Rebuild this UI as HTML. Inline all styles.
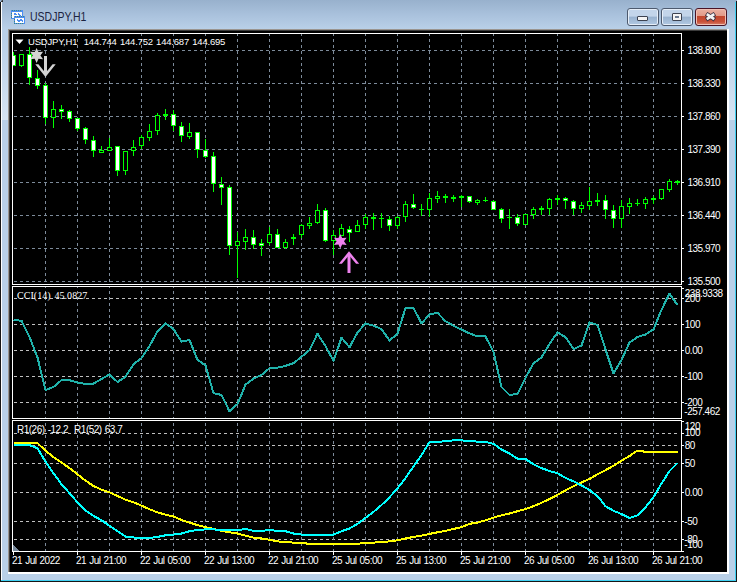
<!DOCTYPE html>
<html><head><meta charset="utf-8"><title>USDJPY,H1</title>
<style>
html,body{margin:0;padding:0;width:739px;height:582px;overflow:hidden;background:#ffffff}
.a{position:absolute}
#win{position:absolute;left:0;top:0;width:737px;height:582px;background:#b9d0e8}
#tb{position:absolute;left:0;top:0;width:737px;height:29px;background:linear-gradient(#98b1cd,#a9c1dc 50%,#b9d0e8)}
#ttl{position:absolute;left:30px;top:10.4px;font-family:"Liberation Sans",sans-serif;font-size:12.5px;color:#1b2340;white-space:pre;transform:scaleX(0.84);transform-origin:0 0}
.btn{position:absolute;top:8px;width:30px;height:16px;border:1px solid #4d5a6e;border-radius:3px;box-shadow:inset 0 0 0 1px #e6eef8;background:linear-gradient(#c3d5ea 0%,#c3d5ea 45%,#98b2cf 50%,#b2c9e3 100%)}
#cls{background:linear-gradient(#eab0a2 0%,#e29a88 42%,#c2452c 46%,#c9523a 80%,#d8826c 100%);border-color:#4a1426;box-shadow:inset 0 0 0 1px #f0c0b4}
</style></head><body>
<div id="win">
<div id="tb"></div>
<div class="a" style="left:2px;top:38px;width:6px;height:82px;background:linear-gradient(#b9d0e8,#d2e1f1 85%,#d6e4f2)"></div>
<div class="a" style="left:729px;top:38px;width:6px;height:82px;background:linear-gradient(#b9d0e8,#d2e1f1 85%,#d6e4f2)"></div>
<div class="a" style="left:0;top:2px;width:1px;height:580px;background:#161616"></div>
<div class="a" style="left:1px;top:0;width:2px;height:2px;background:#2a2a2a;border-radius:2px 0 0 0"></div>
<div class="a" style="left:1px;top:2px;width:1px;height:578px;background:#ffffff"></div>
<div class="a" style="left:735px;top:2px;width:1px;height:579px;background:#40d0f2"></div>
<div class="a" style="left:736px;top:1px;width:1px;height:581px;background:#161616"></div>
<div class="a" style="left:1px;top:580px;width:735px;height:1px;background:#40d0f2"></div>
<div class="a" style="left:0;top:581px;width:737px;height:1px;background:#161616"></div>
<svg style="position:absolute;left:0;top:0" width="30" height="30" shape-rendering="crispEdges">
<rect x="11" y="10" width="12" height="9" fill="#4c8df2"/>
<rect x="12" y="12" width="10" height="6" fill="#fdfdf6"/>
<rect x="14" y="16" width="11" height="8" fill="#4c8df2"/>
<rect x="15" y="18" width="9" height="5" fill="#ffffff"/>
<path d="M13 14h1v-1h1v1h1M17 13h1v1h1v1h1" stroke="#4c8df2" fill="none" transform="translate(0.5,0.5)"/>
<path d="M16 19h1v1h1v1h1v-1h1v-1h1v1h1v1" stroke="#4c8df2" fill="none" transform="translate(0.5,0.5)"/>
<path d="M12 10h1M14 10h1M16 10h1M18 10h1M20 10h1M15 16h1M17 16h1M19 16h1M21 16h1M23 16h1M11 13h1M11 15h1M11 17h1M14 19h1M14 21h1M14 23h1M16 23h1M18 23h1M20 23h1M22 23h1" stroke="#3f8a7a" fill="none" transform="translate(0,0.5)"/>
</svg>
<div id="ttl">USDJPY,H1</div>
<div class="btn" style="left:627px"><div class="a" style="left:9px;top:7px;width:9px;height:3px;border:1px solid #3c4250;border-radius:1px;background:#f4f4f4"></div></div>
<div class="btn" style="left:661px"><div class="a" style="left:10px;top:4px;width:8px;height:6px;border:1px solid #3c4250;border-radius:1px;background:#f4f4f4"><div class="a" style="left:2px;top:2px;width:4px;height:2px;background:#6b7a90"></div></div></div>
<div class="btn" id="cls" style="left:695px"><svg width="30" height="16" style="position:absolute;left:0;top:0"><path d="M11.9 5.9 L17.1 9.4 M17.1 5.9 L11.9 9.4" stroke="#3a3040" stroke-width="4.3" stroke-linecap="square"/><path d="M11.9 5.9 L17.1 9.4 M17.1 5.9 L11.9 9.4" stroke="#f2f2f2" stroke-width="2.7" stroke-linecap="square"/></svg></div>
<div class="a" style="left:8px;top:29px;width:721px;height:545px;background:#000"></div>
<div class="a" style="left:8px;top:29px;width:720px;height:1px;background:#9a9590"></div>
<div class="a" style="left:8px;top:29px;width:1px;height:544px;background:#9a9590"></div>
<div class="a" style="left:9px;top:30px;width:718px;height:1px;background:#3c3c3c"></div>
<div class="a" style="left:9px;top:30px;width:1px;height:542px;background:#3c3c3c"></div>
<div class="a" style="left:727px;top:29px;width:2px;height:545px;background:#ffffff"></div>
<div class="a" style="left:8px;top:572px;width:721px;height:2px;background:#ffffff"></div>
</div>
<svg width="739" height="582" viewBox="0 0 739 582" shape-rendering="crispEdges" style="position:absolute;left:0;top:0"><defs><clipPath id="cp0"><rect x="13" y="34" width="668" height="250"/></clipPath><clipPath id="cp1"><rect x="13" y="287" width="668" height="131"/></clipPath><clipPath id="cp2"><rect x="13" y="421" width="668" height="130"/></clipPath></defs><g clip-path="url(#cp0)"><line x1="14" y1="50.5" x2="680" y2="50.5" stroke="#7d8b9a" stroke-width="1" stroke-dasharray="3 3"/><line x1="14" y1="83.5" x2="680" y2="83.5" stroke="#7d8b9a" stroke-width="1" stroke-dasharray="3 3"/><line x1="14" y1="116.5" x2="680" y2="116.5" stroke="#7d8b9a" stroke-width="1" stroke-dasharray="3 3"/><line x1="14" y1="149.5" x2="680" y2="149.5" stroke="#7d8b9a" stroke-width="1" stroke-dasharray="3 3"/><line x1="14" y1="182.5" x2="680" y2="182.5" stroke="#7d8b9a" stroke-width="1" stroke-dasharray="3 3"/><line x1="14" y1="215.5" x2="680" y2="215.5" stroke="#7d8b9a" stroke-width="1" stroke-dasharray="3 3"/><line x1="14" y1="248.5" x2="680" y2="248.5" stroke="#7d8b9a" stroke-width="1" stroke-dasharray="3 3"/><line x1="14" y1="281.5" x2="680" y2="281.5" stroke="#7d8b9a" stroke-width="1" stroke-dasharray="3 3"/><line x1="45.5" y1="33" x2="45.5" y2="284" stroke="#7d8b9a" stroke-width="1" stroke-dasharray="3 3"/><line x1="77.5" y1="33" x2="77.5" y2="284" stroke="#7d8b9a" stroke-width="1" stroke-dasharray="3 3"/><line x1="109.5" y1="33" x2="109.5" y2="284" stroke="#7d8b9a" stroke-width="1" stroke-dasharray="3 3"/><line x1="141.5" y1="33" x2="141.5" y2="284" stroke="#7d8b9a" stroke-width="1" stroke-dasharray="3 3"/><line x1="173.5" y1="33" x2="173.5" y2="284" stroke="#7d8b9a" stroke-width="1" stroke-dasharray="3 3"/><line x1="205.5" y1="33" x2="205.5" y2="284" stroke="#7d8b9a" stroke-width="1" stroke-dasharray="3 3"/><line x1="237.5" y1="33" x2="237.5" y2="284" stroke="#7d8b9a" stroke-width="1" stroke-dasharray="3 3"/><line x1="269.5" y1="33" x2="269.5" y2="284" stroke="#7d8b9a" stroke-width="1" stroke-dasharray="3 3"/><line x1="301.5" y1="33" x2="301.5" y2="284" stroke="#7d8b9a" stroke-width="1" stroke-dasharray="3 3"/><line x1="333.5" y1="33" x2="333.5" y2="284" stroke="#7d8b9a" stroke-width="1" stroke-dasharray="3 3"/><line x1="365.5" y1="33" x2="365.5" y2="284" stroke="#7d8b9a" stroke-width="1" stroke-dasharray="3 3"/><line x1="397.5" y1="33" x2="397.5" y2="284" stroke="#7d8b9a" stroke-width="1" stroke-dasharray="3 3"/><line x1="429.5" y1="33" x2="429.5" y2="284" stroke="#7d8b9a" stroke-width="1" stroke-dasharray="3 3"/><line x1="461.5" y1="33" x2="461.5" y2="284" stroke="#7d8b9a" stroke-width="1" stroke-dasharray="3 3"/><line x1="493.5" y1="33" x2="493.5" y2="284" stroke="#7d8b9a" stroke-width="1" stroke-dasharray="3 3"/><line x1="525.5" y1="33" x2="525.5" y2="284" stroke="#7d8b9a" stroke-width="1" stroke-dasharray="3 3"/><line x1="557.5" y1="33" x2="557.5" y2="284" stroke="#7d8b9a" stroke-width="1" stroke-dasharray="3 3"/><line x1="589.5" y1="33" x2="589.5" y2="284" stroke="#7d8b9a" stroke-width="1" stroke-dasharray="3 3"/><line x1="621.5" y1="33" x2="621.5" y2="284" stroke="#7d8b9a" stroke-width="1" stroke-dasharray="3 3"/><line x1="653.5" y1="33" x2="653.5" y2="284" stroke="#7d8b9a" stroke-width="1" stroke-dasharray="3 3"/></g><g clip-path="url(#cp1)"><line x1="14" y1="298.5" x2="680" y2="298.5" stroke="#c0c0c0" stroke-width="1" stroke-dasharray="3 3"/><line x1="14" y1="324.5" x2="680" y2="324.5" stroke="#c0c0c0" stroke-width="1" stroke-dasharray="3 3"/><line x1="14" y1="350.5" x2="680" y2="350.5" stroke="#c0c0c0" stroke-width="1" stroke-dasharray="3 3"/><line x1="14" y1="376.5" x2="680" y2="376.5" stroke="#c0c0c0" stroke-width="1" stroke-dasharray="3 3"/><line x1="14" y1="402.5" x2="680" y2="402.5" stroke="#c0c0c0" stroke-width="1" stroke-dasharray="3 3"/><line x1="45.5" y1="33" x2="45.5" y2="418" stroke="#7d8b9a" stroke-width="1" stroke-dasharray="3 3"/><line x1="77.5" y1="33" x2="77.5" y2="418" stroke="#7d8b9a" stroke-width="1" stroke-dasharray="3 3"/><line x1="109.5" y1="33" x2="109.5" y2="418" stroke="#7d8b9a" stroke-width="1" stroke-dasharray="3 3"/><line x1="141.5" y1="33" x2="141.5" y2="418" stroke="#7d8b9a" stroke-width="1" stroke-dasharray="3 3"/><line x1="173.5" y1="33" x2="173.5" y2="418" stroke="#7d8b9a" stroke-width="1" stroke-dasharray="3 3"/><line x1="205.5" y1="33" x2="205.5" y2="418" stroke="#7d8b9a" stroke-width="1" stroke-dasharray="3 3"/><line x1="237.5" y1="33" x2="237.5" y2="418" stroke="#7d8b9a" stroke-width="1" stroke-dasharray="3 3"/><line x1="269.5" y1="33" x2="269.5" y2="418" stroke="#7d8b9a" stroke-width="1" stroke-dasharray="3 3"/><line x1="301.5" y1="33" x2="301.5" y2="418" stroke="#7d8b9a" stroke-width="1" stroke-dasharray="3 3"/><line x1="333.5" y1="33" x2="333.5" y2="418" stroke="#7d8b9a" stroke-width="1" stroke-dasharray="3 3"/><line x1="365.5" y1="33" x2="365.5" y2="418" stroke="#7d8b9a" stroke-width="1" stroke-dasharray="3 3"/><line x1="397.5" y1="33" x2="397.5" y2="418" stroke="#7d8b9a" stroke-width="1" stroke-dasharray="3 3"/><line x1="429.5" y1="33" x2="429.5" y2="418" stroke="#7d8b9a" stroke-width="1" stroke-dasharray="3 3"/><line x1="461.5" y1="33" x2="461.5" y2="418" stroke="#7d8b9a" stroke-width="1" stroke-dasharray="3 3"/><line x1="493.5" y1="33" x2="493.5" y2="418" stroke="#7d8b9a" stroke-width="1" stroke-dasharray="3 3"/><line x1="525.5" y1="33" x2="525.5" y2="418" stroke="#7d8b9a" stroke-width="1" stroke-dasharray="3 3"/><line x1="557.5" y1="33" x2="557.5" y2="418" stroke="#7d8b9a" stroke-width="1" stroke-dasharray="3 3"/><line x1="589.5" y1="33" x2="589.5" y2="418" stroke="#7d8b9a" stroke-width="1" stroke-dasharray="3 3"/><line x1="621.5" y1="33" x2="621.5" y2="418" stroke="#7d8b9a" stroke-width="1" stroke-dasharray="3 3"/><line x1="653.5" y1="33" x2="653.5" y2="418" stroke="#7d8b9a" stroke-width="1" stroke-dasharray="3 3"/></g><g clip-path="url(#cp2)"><line x1="14" y1="433.5" x2="680" y2="433.5" stroke="#c0c0c0" stroke-width="1" stroke-dasharray="3 3"/><line x1="14" y1="445.5" x2="680" y2="445.5" stroke="#c0c0c0" stroke-width="1" stroke-dasharray="3 3"/><line x1="14" y1="463.5" x2="680" y2="463.5" stroke="#c0c0c0" stroke-width="1" stroke-dasharray="3 3"/><line x1="14" y1="492.5" x2="680" y2="492.5" stroke="#c0c0c0" stroke-width="1" stroke-dasharray="3 3"/><line x1="14" y1="521.5" x2="680" y2="521.5" stroke="#c0c0c0" stroke-width="1" stroke-dasharray="3 3"/><line x1="14" y1="539.5" x2="680" y2="539.5" stroke="#c0c0c0" stroke-width="1" stroke-dasharray="3 3"/><line x1="45.5" y1="33" x2="45.5" y2="551" stroke="#7d8b9a" stroke-width="1" stroke-dasharray="3 3"/><line x1="77.5" y1="33" x2="77.5" y2="551" stroke="#7d8b9a" stroke-width="1" stroke-dasharray="3 3"/><line x1="109.5" y1="33" x2="109.5" y2="551" stroke="#7d8b9a" stroke-width="1" stroke-dasharray="3 3"/><line x1="141.5" y1="33" x2="141.5" y2="551" stroke="#7d8b9a" stroke-width="1" stroke-dasharray="3 3"/><line x1="173.5" y1="33" x2="173.5" y2="551" stroke="#7d8b9a" stroke-width="1" stroke-dasharray="3 3"/><line x1="205.5" y1="33" x2="205.5" y2="551" stroke="#7d8b9a" stroke-width="1" stroke-dasharray="3 3"/><line x1="237.5" y1="33" x2="237.5" y2="551" stroke="#7d8b9a" stroke-width="1" stroke-dasharray="3 3"/><line x1="269.5" y1="33" x2="269.5" y2="551" stroke="#7d8b9a" stroke-width="1" stroke-dasharray="3 3"/><line x1="301.5" y1="33" x2="301.5" y2="551" stroke="#7d8b9a" stroke-width="1" stroke-dasharray="3 3"/><line x1="333.5" y1="33" x2="333.5" y2="551" stroke="#7d8b9a" stroke-width="1" stroke-dasharray="3 3"/><line x1="365.5" y1="33" x2="365.5" y2="551" stroke="#7d8b9a" stroke-width="1" stroke-dasharray="3 3"/><line x1="397.5" y1="33" x2="397.5" y2="551" stroke="#7d8b9a" stroke-width="1" stroke-dasharray="3 3"/><line x1="429.5" y1="33" x2="429.5" y2="551" stroke="#7d8b9a" stroke-width="1" stroke-dasharray="3 3"/><line x1="461.5" y1="33" x2="461.5" y2="551" stroke="#7d8b9a" stroke-width="1" stroke-dasharray="3 3"/><line x1="493.5" y1="33" x2="493.5" y2="551" stroke="#7d8b9a" stroke-width="1" stroke-dasharray="3 3"/><line x1="525.5" y1="33" x2="525.5" y2="551" stroke="#7d8b9a" stroke-width="1" stroke-dasharray="3 3"/><line x1="557.5" y1="33" x2="557.5" y2="551" stroke="#7d8b9a" stroke-width="1" stroke-dasharray="3 3"/><line x1="589.5" y1="33" x2="589.5" y2="551" stroke="#7d8b9a" stroke-width="1" stroke-dasharray="3 3"/><line x1="621.5" y1="33" x2="621.5" y2="551" stroke="#7d8b9a" stroke-width="1" stroke-dasharray="3 3"/><line x1="653.5" y1="33" x2="653.5" y2="551" stroke="#7d8b9a" stroke-width="1" stroke-dasharray="3 3"/></g><g clip-path="url(#cp0)"><rect x="13" y="52" width="1" height="14" fill="#00ff00"/><rect x="11" y="55" width="5" height="11" fill="#00ff00"/><rect x="12" y="56" width="3" height="9" fill="#ffffff"/><rect x="21" y="54" width="1" height="13" fill="#00ff00"/><rect x="19" y="54" width="5" height="12" fill="#00ff00"/><rect x="20" y="55" width="3" height="10" fill="#000000"/><rect x="29" y="47" width="1" height="38" fill="#00ff00"/><rect x="27" y="54" width="5" height="24" fill="#00ff00"/><rect x="28" y="55" width="3" height="22" fill="#ffffff"/><rect x="37" y="70" width="1" height="19" fill="#00ff00"/><rect x="35" y="78" width="5" height="8" fill="#00ff00"/><rect x="36" y="79" width="3" height="6" fill="#ffffff"/><rect x="45" y="83" width="1" height="41" fill="#00ff00"/><rect x="43" y="85" width="5" height="33" fill="#00ff00"/><rect x="44" y="86" width="3" height="31" fill="#ffffff"/><rect x="53" y="101" width="1" height="27" fill="#00ff00"/><rect x="51" y="109" width="5" height="9" fill="#00ff00"/><rect x="52" y="110" width="3" height="7" fill="#000000"/><rect x="61" y="105" width="1" height="14" fill="#00ff00"/><rect x="59" y="109" width="5" height="3" fill="#00ff00"/><rect x="60" y="110" width="3" height="1" fill="#ffffff"/><rect x="69" y="110" width="1" height="12" fill="#00ff00"/><rect x="67" y="111" width="5" height="8" fill="#00ff00"/><rect x="68" y="112" width="3" height="6" fill="#ffffff"/><rect x="77" y="118" width="1" height="13" fill="#00ff00"/><rect x="75" y="118" width="5" height="11" fill="#00ff00"/><rect x="76" y="119" width="3" height="9" fill="#ffffff"/><rect x="85" y="127" width="1" height="17" fill="#00ff00"/><rect x="83" y="128" width="5" height="12" fill="#00ff00"/><rect x="84" y="129" width="3" height="10" fill="#ffffff"/><rect x="93" y="136" width="1" height="21" fill="#00ff00"/><rect x="91" y="140" width="5" height="11" fill="#00ff00"/><rect x="92" y="141" width="3" height="9" fill="#ffffff"/><rect x="101" y="146" width="1" height="7" fill="#00ff00"/><rect x="99" y="150" width="5" height="3" fill="#00ff00"/><rect x="100" y="151" width="3" height="1" fill="#000000"/><rect x="109" y="138" width="1" height="13" fill="#00ff00"/><rect x="107" y="147" width="5" height="4" fill="#00ff00"/><rect x="108" y="148" width="3" height="2" fill="#000000"/><rect x="117" y="146" width="1" height="30" fill="#00ff00"/><rect x="115" y="146" width="5" height="25" fill="#00ff00"/><rect x="116" y="147" width="3" height="23" fill="#ffffff"/><rect x="125" y="151" width="1" height="24" fill="#00ff00"/><rect x="123" y="151" width="5" height="20" fill="#00ff00"/><rect x="124" y="152" width="3" height="18" fill="#000000"/><rect x="133" y="140" width="1" height="16" fill="#00ff00"/><rect x="131" y="147" width="5" height="4" fill="#00ff00"/><rect x="132" y="148" width="3" height="2" fill="#000000"/><rect x="141" y="135" width="1" height="14" fill="#00ff00"/><rect x="139" y="137" width="5" height="9" fill="#00ff00"/><rect x="140" y="138" width="3" height="7" fill="#000000"/><rect x="149" y="124" width="1" height="17" fill="#00ff00"/><rect x="147" y="131" width="5" height="7" fill="#00ff00"/><rect x="148" y="132" width="3" height="5" fill="#000000"/><rect x="157" y="113" width="1" height="22" fill="#00ff00"/><rect x="155" y="115" width="5" height="16" fill="#00ff00"/><rect x="156" y="116" width="3" height="14" fill="#000000"/><rect x="165" y="109" width="1" height="11" fill="#00ff00"/><rect x="163" y="114" width="5" height="2" fill="#00ff00"/><rect x="173" y="110" width="1" height="21" fill="#00ff00"/><rect x="171" y="114" width="5" height="12" fill="#00ff00"/><rect x="172" y="115" width="3" height="10" fill="#ffffff"/><rect x="181" y="122" width="1" height="20" fill="#00ff00"/><rect x="179" y="126" width="5" height="10" fill="#00ff00"/><rect x="180" y="127" width="3" height="8" fill="#ffffff"/><rect x="189" y="123" width="1" height="16" fill="#00ff00"/><rect x="187" y="132" width="5" height="5" fill="#00ff00"/><rect x="188" y="133" width="3" height="3" fill="#000000"/><rect x="197" y="132" width="1" height="26" fill="#00ff00"/><rect x="195" y="132" width="5" height="18" fill="#00ff00"/><rect x="196" y="133" width="3" height="16" fill="#ffffff"/><rect x="205" y="139" width="1" height="19" fill="#00ff00"/><rect x="203" y="150" width="5" height="7" fill="#00ff00"/><rect x="204" y="151" width="3" height="5" fill="#ffffff"/><rect x="213" y="152" width="1" height="40" fill="#00ff00"/><rect x="211" y="156" width="5" height="28" fill="#00ff00"/><rect x="212" y="157" width="3" height="26" fill="#ffffff"/><rect x="221" y="177" width="1" height="28" fill="#00ff00"/><rect x="219" y="184" width="5" height="4" fill="#00ff00"/><rect x="220" y="185" width="3" height="2" fill="#ffffff"/><rect x="229" y="185" width="1" height="70" fill="#00ff00"/><rect x="227" y="187" width="5" height="59" fill="#00ff00"/><rect x="228" y="188" width="3" height="57" fill="#ffffff"/><rect x="237" y="232" width="1" height="46" fill="#00ff00"/><rect x="235" y="241" width="5" height="5" fill="#00ff00"/><rect x="236" y="242" width="3" height="3" fill="#000000"/><rect x="245" y="229" width="1" height="21" fill="#00ff00"/><rect x="243" y="237" width="5" height="5" fill="#00ff00"/><rect x="244" y="238" width="3" height="3" fill="#000000"/><rect x="253" y="230" width="1" height="19" fill="#00ff00"/><rect x="251" y="237" width="5" height="8" fill="#00ff00"/><rect x="252" y="238" width="3" height="6" fill="#ffffff"/><rect x="261" y="239" width="1" height="17" fill="#00ff00"/><rect x="259" y="243" width="5" height="3" fill="#00ff00"/><rect x="260" y="244" width="3" height="1" fill="#ffffff"/><rect x="269" y="227" width="1" height="18" fill="#00ff00"/><rect x="267" y="234" width="5" height="9" fill="#00ff00"/><rect x="268" y="235" width="3" height="7" fill="#000000"/><rect x="277" y="229" width="1" height="19" fill="#00ff00"/><rect x="275" y="234" width="5" height="14" fill="#00ff00"/><rect x="276" y="235" width="3" height="12" fill="#ffffff"/><rect x="285" y="239" width="1" height="10" fill="#00ff00"/><rect x="283" y="242" width="5" height="6" fill="#00ff00"/><rect x="284" y="243" width="3" height="4" fill="#000000"/><rect x="293" y="234" width="1" height="11" fill="#00ff00"/><rect x="291" y="237" width="5" height="2" fill="#00ff00"/><rect x="301" y="224" width="1" height="14" fill="#00ff00"/><rect x="299" y="225" width="5" height="10" fill="#00ff00"/><rect x="300" y="226" width="3" height="8" fill="#000000"/><rect x="309" y="217" width="1" height="12" fill="#00ff00"/><rect x="307" y="223" width="5" height="3" fill="#00ff00"/><rect x="308" y="224" width="3" height="1" fill="#000000"/><rect x="317" y="204" width="1" height="20" fill="#00ff00"/><rect x="315" y="210" width="5" height="13" fill="#00ff00"/><rect x="316" y="211" width="3" height="11" fill="#000000"/><rect x="325" y="208" width="1" height="34" fill="#00ff00"/><rect x="323" y="210" width="5" height="31" fill="#00ff00"/><rect x="324" y="211" width="3" height="29" fill="#ffffff"/><rect x="333" y="230" width="1" height="25" fill="#00ff00"/><rect x="331" y="235" width="5" height="6" fill="#00ff00"/><rect x="332" y="236" width="3" height="4" fill="#000000"/><rect x="341" y="224" width="1" height="12" fill="#00ff00"/><rect x="339" y="228" width="5" height="8" fill="#00ff00"/><rect x="340" y="229" width="3" height="6" fill="#000000"/><rect x="349" y="226" width="1" height="16" fill="#00ff00"/><rect x="347" y="229" width="5" height="4" fill="#00ff00"/><rect x="348" y="230" width="3" height="2" fill="#ffffff"/><rect x="357" y="220" width="1" height="12" fill="#00ff00"/><rect x="355" y="225" width="5" height="7" fill="#00ff00"/><rect x="356" y="226" width="3" height="5" fill="#000000"/><rect x="365" y="214" width="1" height="15" fill="#00ff00"/><rect x="363" y="217" width="5" height="8" fill="#00ff00"/><rect x="364" y="218" width="3" height="6" fill="#000000"/><rect x="373" y="213" width="1" height="17" fill="#00ff00"/><rect x="371" y="217" width="5" height="2" fill="#00ff00"/><rect x="381" y="213" width="1" height="15" fill="#00ff00"/><rect x="379" y="218" width="5" height="1" fill="#00ff00"/><rect x="389" y="216" width="1" height="15" fill="#00ff00"/><rect x="387" y="219" width="5" height="7" fill="#00ff00"/><rect x="388" y="220" width="3" height="5" fill="#ffffff"/><rect x="397" y="216" width="1" height="13" fill="#00ff00"/><rect x="395" y="217" width="5" height="9" fill="#00ff00"/><rect x="396" y="218" width="3" height="7" fill="#000000"/><rect x="405" y="201" width="1" height="21" fill="#00ff00"/><rect x="403" y="204" width="5" height="13" fill="#00ff00"/><rect x="404" y="205" width="3" height="11" fill="#000000"/><rect x="413" y="194" width="1" height="15" fill="#00ff00"/><rect x="411" y="204" width="5" height="4" fill="#00ff00"/><rect x="412" y="205" width="3" height="2" fill="#ffffff"/><rect x="421" y="204" width="1" height="12" fill="#00ff00"/><rect x="419" y="209" width="5" height="1" fill="#00ff00"/><rect x="429" y="193" width="1" height="24" fill="#00ff00"/><rect x="427" y="198" width="5" height="12" fill="#00ff00"/><rect x="428" y="199" width="3" height="10" fill="#000000"/><rect x="437" y="191" width="1" height="12" fill="#00ff00"/><rect x="435" y="196" width="5" height="3" fill="#00ff00"/><rect x="436" y="197" width="3" height="1" fill="#000000"/><rect x="445" y="194" width="1" height="9" fill="#00ff00"/><rect x="443" y="196" width="5" height="2" fill="#00ff00"/><rect x="453" y="195" width="1" height="7" fill="#00ff00"/><rect x="451" y="197" width="5" height="2" fill="#00ff00"/><rect x="461" y="195" width="1" height="12" fill="#00ff00"/><rect x="459" y="196" width="5" height="2" fill="#00ff00"/><rect x="469" y="196" width="1" height="7" fill="#00ff00"/><rect x="467" y="196" width="5" height="6" fill="#00ff00"/><rect x="468" y="197" width="3" height="4" fill="#ffffff"/><rect x="477" y="199" width="1" height="6" fill="#00ff00"/><rect x="475" y="200" width="5" height="3" fill="#00ff00"/><rect x="476" y="201" width="3" height="1" fill="#000000"/><rect x="485" y="197" width="1" height="5" fill="#00ff00"/><rect x="483" y="200" width="5" height="1" fill="#00ff00"/><rect x="493" y="200" width="1" height="10" fill="#00ff00"/><rect x="491" y="201" width="5" height="9" fill="#00ff00"/><rect x="492" y="202" width="3" height="7" fill="#ffffff"/><rect x="501" y="208" width="1" height="15" fill="#00ff00"/><rect x="499" y="209" width="5" height="10" fill="#00ff00"/><rect x="500" y="210" width="3" height="8" fill="#ffffff"/><rect x="509" y="209" width="1" height="20" fill="#00ff00"/><rect x="507" y="217" width="5" height="1" fill="#00ff00"/><rect x="517" y="214" width="1" height="12" fill="#00ff00"/><rect x="515" y="217" width="5" height="7" fill="#00ff00"/><rect x="516" y="218" width="3" height="5" fill="#ffffff"/><rect x="525" y="214" width="1" height="11" fill="#00ff00"/><rect x="523" y="214" width="5" height="11" fill="#00ff00"/><rect x="524" y="215" width="3" height="9" fill="#000000"/><rect x="533" y="207" width="1" height="12" fill="#00ff00"/><rect x="531" y="209" width="5" height="6" fill="#00ff00"/><rect x="532" y="210" width="3" height="4" fill="#000000"/><rect x="541" y="206" width="1" height="9" fill="#00ff00"/><rect x="539" y="208" width="5" height="2" fill="#00ff00"/><rect x="549" y="198" width="1" height="17" fill="#00ff00"/><rect x="547" y="199" width="5" height="10" fill="#00ff00"/><rect x="548" y="200" width="3" height="8" fill="#000000"/><rect x="557" y="195" width="1" height="10" fill="#00ff00"/><rect x="555" y="198" width="5" height="2" fill="#00ff00"/><rect x="565" y="197" width="1" height="12" fill="#00ff00"/><rect x="563" y="198" width="5" height="3" fill="#00ff00"/><rect x="564" y="199" width="3" height="1" fill="#ffffff"/><rect x="573" y="200" width="1" height="15" fill="#00ff00"/><rect x="571" y="201" width="5" height="8" fill="#00ff00"/><rect x="572" y="202" width="3" height="6" fill="#ffffff"/><rect x="581" y="202" width="1" height="11" fill="#00ff00"/><rect x="579" y="205" width="5" height="4" fill="#00ff00"/><rect x="580" y="206" width="3" height="2" fill="#000000"/><rect x="589" y="187" width="1" height="23" fill="#00ff00"/><rect x="587" y="201" width="5" height="5" fill="#00ff00"/><rect x="588" y="202" width="3" height="3" fill="#000000"/><rect x="597" y="193" width="1" height="13" fill="#00ff00"/><rect x="595" y="200" width="5" height="2" fill="#00ff00"/><rect x="605" y="195" width="1" height="24" fill="#00ff00"/><rect x="603" y="200" width="5" height="10" fill="#00ff00"/><rect x="604" y="201" width="3" height="8" fill="#ffffff"/><rect x="613" y="205" width="1" height="23" fill="#00ff00"/><rect x="611" y="210" width="5" height="9" fill="#00ff00"/><rect x="612" y="211" width="3" height="7" fill="#ffffff"/><rect x="621" y="200" width="1" height="28" fill="#00ff00"/><rect x="619" y="206" width="5" height="13" fill="#00ff00"/><rect x="620" y="207" width="3" height="11" fill="#000000"/><rect x="629" y="198" width="1" height="16" fill="#00ff00"/><rect x="627" y="203" width="5" height="4" fill="#00ff00"/><rect x="628" y="204" width="3" height="2" fill="#000000"/><rect x="637" y="199" width="1" height="7" fill="#00ff00"/><rect x="635" y="203" width="5" height="1" fill="#00ff00"/><rect x="645" y="197" width="1" height="12" fill="#00ff00"/><rect x="643" y="199" width="5" height="5" fill="#00ff00"/><rect x="644" y="200" width="3" height="3" fill="#000000"/><rect x="653" y="196" width="1" height="8" fill="#00ff00"/><rect x="651" y="198" width="5" height="2" fill="#00ff00"/><rect x="661" y="189" width="1" height="11" fill="#00ff00"/><rect x="659" y="189" width="5" height="10" fill="#00ff00"/><rect x="660" y="190" width="3" height="8" fill="#000000"/><rect x="669" y="179" width="1" height="13" fill="#00ff00"/><rect x="667" y="181" width="5" height="9" fill="#00ff00"/><rect x="668" y="182" width="3" height="7" fill="#000000"/><rect x="677" y="180" width="1" height="5" fill="#00ff00"/><rect x="675" y="181" width="5" height="2" fill="#00ff00"/></g><g clip-path="url(#cp1)"><polyline points="13.5,320.0 21.5,320.7 29.5,337.0 37.5,357.5 45.5,390.0 53.5,387.0 61.5,380.2 69.5,380.2 77.5,382.5 85.5,384.0 93.5,383.6 101.5,379.0 109.5,374.5 117.5,382.0 125.5,376.8 133.5,364.3 141.5,358.2 149.5,346.0 157.5,331.4 165.5,323.4 173.5,329.1 181.5,341.6 189.5,340.0 197.5,359.8 205.5,365.4 213.5,393.1 221.5,395.0 229.5,411.3 237.5,404.0 245.5,384.7 253.5,378.6 261.5,375.0 269.5,368.2 277.5,367.7 285.5,365.9 293.5,363.2 301.5,356.8 309.5,350.0 317.5,333.7 325.5,346.1 333.5,360.9 341.5,337.7 349.5,347.3 357.5,332.5 365.5,323.4 373.5,325.7 381.5,329.1 389.5,340.5 397.5,333.7 405.5,308.0 413.5,308.0 421.5,323.4 429.5,314.4 437.5,312.8 445.5,321.2 453.5,325.7 461.5,329.6 469.5,333.4 477.5,336.4 485.5,336.4 493.5,351.8 501.5,387.0 509.5,395.0 517.5,393.8 525.5,377.9 533.5,363.2 541.5,357.5 549.5,343.9 557.5,332.5 565.5,337.1 573.5,349.1 581.5,345.5 589.5,322.5 597.5,325.0 605.5,349.3 613.5,373.5 621.5,360.0 629.5,342.5 637.5,337.0 645.5,334.5 653.5,329.4 661.5,309.8 669.5,293.7 677.5,305.0" fill="none" stroke="#20b2aa" stroke-width="2" stroke-linejoin="round"/></g><g clip-path="url(#cp2)"><polyline points="13.5,443.2 21.5,443.2 29.5,443.0 37.5,443.0 45.5,450.8 53.5,457.1 61.5,462.6 69.5,468.0 77.5,474.3 85.5,480.6 93.5,486.0 101.5,489.6 109.5,492.3 117.5,496.0 125.5,499.6 133.5,502.3 141.5,505.6 149.5,509.2 157.5,512.4 165.5,514.6 173.5,516.5 181.5,519.9 189.5,522.6 197.5,525.1 205.5,527.1 213.5,529.0 221.5,530.8 229.5,532.3 237.5,533.5 245.5,535.7 253.5,537.6 261.5,538.5 269.5,539.8 277.5,541.4 285.5,542.1 293.5,542.6 301.5,543.2 309.5,543.7 317.5,543.7 325.5,543.7 333.5,543.7 341.5,543.7 349.5,543.7 357.5,543.7 365.5,543.0 373.5,542.6 381.5,542.1 389.5,541.4 397.5,540.3 405.5,538.5 413.5,536.9 421.5,535.7 429.5,533.9 437.5,532.3 445.5,530.8 453.5,529.0 461.5,527.1 469.5,523.8 477.5,522.6 485.5,520.3 493.5,517.6 501.5,515.3 509.5,513.5 517.5,511.2 525.5,509.0 533.5,506.2 541.5,502.8 549.5,499.0 557.5,494.9 565.5,490.4 573.5,486.3 581.5,482.4 589.5,479.0 597.5,474.2 605.5,470.2 613.5,465.8 621.5,460.7 629.5,456.0 637.5,450.6 645.5,451.8 653.5,451.8 661.5,451.8 669.5,451.8 677.5,451.8" fill="none" stroke="#ffff00" stroke-width="2" stroke-linejoin="round"/><polyline points="13.5,444.5 21.5,444.5 29.5,445.0 37.5,448.4 45.5,461.7 53.5,473.4 61.5,484.2 69.5,493.2 77.5,502.3 85.5,510.4 93.5,515.8 101.5,520.3 109.5,525.7 117.5,531.2 125.5,536.6 133.5,537.5 141.5,538.0 149.5,538.0 157.5,536.9 165.5,535.3 173.5,534.6 181.5,533.5 189.5,531.2 197.5,530.0 205.5,529.4 213.5,529.4 221.5,530.1 229.5,530.1 237.5,530.1 245.5,529.0 253.5,530.8 261.5,530.8 269.5,530.1 277.5,530.8 285.5,531.2 293.5,533.5 301.5,534.6 309.5,534.6 317.5,534.6 325.5,534.6 333.5,534.6 341.5,531.2 349.5,528.5 357.5,523.9 365.5,518.0 373.5,511.9 381.5,505.1 389.5,497.2 397.5,488.5 405.5,477.9 413.5,466.5 421.5,455.2 429.5,442.0 437.5,442.0 445.5,441.1 453.5,440.4 461.5,440.4 469.5,441.1 477.5,441.6 485.5,442.0 493.5,443.8 501.5,449.5 509.5,453.6 517.5,458.6 525.5,459.0 533.5,464.3 541.5,468.1 549.5,471.0 557.5,473.3 565.5,477.9 573.5,481.3 581.5,485.5 589.5,490.0 597.5,496.0 605.5,506.2 613.5,510.8 621.5,514.0 629.5,518.0 637.5,515.3 645.5,507.4 653.5,497.2 661.5,483.5 669.5,471.0 677.5,463.1" fill="none" stroke="#00ffff" stroke-width="2" stroke-linejoin="round"/></g><polygon points="36.60,47.90 34.70,52.11 30.10,51.65 32.80,55.40 30.10,59.15 34.70,58.69 36.60,62.90 38.50,58.69 43.10,59.15 40.40,55.40 43.10,51.65 38.50,52.11" fill="#d3d3d3" shape-rendering="geometricPrecision"/><g fill="#d3d3d3" shape-rendering="geometricPrecision"><rect x="44" y="56" width="3" height="19"/><polygon points="35.3,64.3 45.5,76.9 55.7,64.3 52.6,64.3 45.5,73.0 38.4,64.3"/></g><polygon points="340.30,234.00 338.45,238.10 333.98,237.65 336.60,241.30 333.98,244.95 338.45,244.50 340.30,248.60 342.15,244.50 346.62,244.95 344.00,241.30 346.62,237.65 342.15,238.10" fill="#ee82ee" shape-rendering="geometricPrecision"/><g fill="#ee82ee" shape-rendering="geometricPrecision"><rect x="347.5" y="254" width="3" height="19"/><polygon points="338.8,263.7 349.0,251.3 359.2,263.7 356.1,263.7 349.0,255.2 341.9,263.7"/></g><rect x="12.5" y="33.5" width="669" height="251" fill="none" stroke="#ffffff" stroke-width="1"/><rect x="12.5" y="286.5" width="669" height="132" fill="none" stroke="#ffffff" stroke-width="1"/><rect x="12.5" y="420.5" width="669" height="131" fill="none" stroke="#ffffff" stroke-width="1"/><polygon points="13,545 13,551 19,551" fill="#778899"/><rect x="682" y="50" width="2" height="1" fill="#ffffff"/><text x="687.5" y="53.5" fill="#ffffff" style='font-family:"Liberation Sans",sans-serif;font-size:10px;letter-spacing:-0.5px;word-spacing:0.8px' text-anchor="start">138.800</text><rect x="682" y="83" width="2" height="1" fill="#ffffff"/><text x="687.5" y="86.5" fill="#ffffff" style='font-family:"Liberation Sans",sans-serif;font-size:10px;letter-spacing:-0.5px;word-spacing:0.8px' text-anchor="start">138.330</text><rect x="682" y="116" width="2" height="1" fill="#ffffff"/><text x="687.5" y="119.5" fill="#ffffff" style='font-family:"Liberation Sans",sans-serif;font-size:10px;letter-spacing:-0.5px;word-spacing:0.8px' text-anchor="start">137.860</text><rect x="682" y="149" width="2" height="1" fill="#ffffff"/><text x="687.5" y="152.5" fill="#ffffff" style='font-family:"Liberation Sans",sans-serif;font-size:10px;letter-spacing:-0.5px;word-spacing:0.8px' text-anchor="start">137.390</text><rect x="682" y="182" width="2" height="1" fill="#ffffff"/><text x="687.5" y="185.5" fill="#ffffff" style='font-family:"Liberation Sans",sans-serif;font-size:10px;letter-spacing:-0.5px;word-spacing:0.8px' text-anchor="start">136.910</text><rect x="682" y="215" width="2" height="1" fill="#ffffff"/><text x="687.5" y="218.5" fill="#ffffff" style='font-family:"Liberation Sans",sans-serif;font-size:10px;letter-spacing:-0.5px;word-spacing:0.8px' text-anchor="start">136.440</text><rect x="682" y="248" width="2" height="1" fill="#ffffff"/><text x="687.5" y="251.5" fill="#ffffff" style='font-family:"Liberation Sans",sans-serif;font-size:10px;letter-spacing:-0.5px;word-spacing:0.8px' text-anchor="start">135.970</text><rect x="682" y="281" width="2" height="1" fill="#ffffff"/><text x="687.5" y="284.5" fill="#ffffff" style='font-family:"Liberation Sans",sans-serif;font-size:10px;letter-spacing:-0.5px;word-spacing:0.8px' text-anchor="start">135.500</text><rect x="682" y="288" width="2" height="1" fill="#ffffff"/><text x="684.8" y="297" fill="#ffffff" style='font-family:"Liberation Sans",sans-serif;font-size:10px;letter-spacing:-0.5px;word-spacing:0.8px' text-anchor="start">238.9338</text><rect x="682" y="298" width="2" height="1" fill="#ffffff"/><text x="684.8" y="302" fill="#ffffff" style='font-family:"Liberation Sans",sans-serif;font-size:10px;letter-spacing:-0.5px;word-spacing:0.8px' text-anchor="start">200</text><rect x="682" y="324" width="2" height="1" fill="#ffffff"/><text x="684.8" y="328" fill="#ffffff" style='font-family:"Liberation Sans",sans-serif;font-size:10px;letter-spacing:-0.5px;word-spacing:0.8px' text-anchor="start">100</text><rect x="682" y="350" width="2" height="1" fill="#ffffff"/><text x="684.8" y="354" fill="#ffffff" style='font-family:"Liberation Sans",sans-serif;font-size:10px;letter-spacing:-0.5px;word-spacing:0.8px' text-anchor="start">0.00</text><rect x="682" y="376" width="2" height="1" fill="#ffffff"/><text x="684.3" y="380" fill="#ffffff" style='font-family:"Liberation Sans",sans-serif;font-size:10px;letter-spacing:-0.5px;word-spacing:0.8px' text-anchor="start">-100</text><rect x="682" y="402" width="2" height="1" fill="#ffffff"/><text x="684.3" y="406" fill="#ffffff" style='font-family:"Liberation Sans",sans-serif;font-size:10px;letter-spacing:-0.5px;word-spacing:0.8px' text-anchor="start">-200</text><text x="684.3" y="415" fill="#ffffff" style='font-family:"Liberation Sans",sans-serif;font-size:10px;letter-spacing:-0.5px;word-spacing:0.8px' text-anchor="start">-257.462</text><rect x="682" y="421" width="2" height="1" fill="#ffffff"/><text x="684.8" y="430" fill="#ffffff" style='font-family:"Liberation Sans",sans-serif;font-size:10px;letter-spacing:-0.5px;word-spacing:0.8px' text-anchor="start">120</text><rect x="682" y="433" width="2" height="1" fill="#ffffff"/><text x="684.8" y="436" fill="#ffffff" style='font-family:"Liberation Sans",sans-serif;font-size:10px;letter-spacing:-0.5px;word-spacing:0.8px' text-anchor="start">100</text><rect x="682" y="445" width="2" height="1" fill="#ffffff"/><text x="684.8" y="449" fill="#ffffff" style='font-family:"Liberation Sans",sans-serif;font-size:10px;letter-spacing:-0.5px;word-spacing:0.8px' text-anchor="start">80</text><rect x="682" y="463" width="2" height="1" fill="#ffffff"/><text x="684.8" y="467" fill="#ffffff" style='font-family:"Liberation Sans",sans-serif;font-size:10px;letter-spacing:-0.5px;word-spacing:0.8px' text-anchor="start">50</text><rect x="682" y="492" width="2" height="1" fill="#ffffff"/><text x="684.8" y="496" fill="#ffffff" style='font-family:"Liberation Sans",sans-serif;font-size:10px;letter-spacing:-0.5px;word-spacing:0.8px' text-anchor="start">0.00</text><rect x="682" y="521" width="2" height="1" fill="#ffffff"/><text x="684.3" y="525" fill="#ffffff" style='font-family:"Liberation Sans",sans-serif;font-size:10px;letter-spacing:-0.5px;word-spacing:0.8px' text-anchor="start">-50</text><rect x="682" y="539" width="2" height="1" fill="#ffffff"/><text x="684.3" y="543" fill="#ffffff" style='font-family:"Liberation Sans",sans-serif;font-size:10px;letter-spacing:-0.5px;word-spacing:0.8px' text-anchor="start">-80</text><rect x="682" y="551" width="2" height="1" fill="#ffffff"/><text x="684.3" y="548" fill="#ffffff" style='font-family:"Liberation Sans",sans-serif;font-size:10px;letter-spacing:-0.5px;word-spacing:0.8px' text-anchor="start">-100</text><rect x="13" y="552" width="1" height="3" fill="#ffffff"/><text x="12" y="564" fill="#ffffff" style='font-family:"Liberation Sans",sans-serif;font-size:10px;letter-spacing:-0.5px;word-spacing:0.8px' text-anchor="start">21 Jul 2022</text><rect x="77" y="552" width="1" height="3" fill="#ffffff"/><text x="76" y="564" fill="#ffffff" style='font-family:"Liberation Sans",sans-serif;font-size:10px;letter-spacing:-0.5px;word-spacing:0.8px' text-anchor="start">21 Jul 21:00</text><rect x="141" y="552" width="1" height="3" fill="#ffffff"/><text x="140" y="564" fill="#ffffff" style='font-family:"Liberation Sans",sans-serif;font-size:10px;letter-spacing:-0.5px;word-spacing:0.8px' text-anchor="start">22 Jul 05:00</text><rect x="205" y="552" width="1" height="3" fill="#ffffff"/><text x="204" y="564" fill="#ffffff" style='font-family:"Liberation Sans",sans-serif;font-size:10px;letter-spacing:-0.5px;word-spacing:0.8px' text-anchor="start">22 Jul 13:00</text><rect x="269" y="552" width="1" height="3" fill="#ffffff"/><text x="268" y="564" fill="#ffffff" style='font-family:"Liberation Sans",sans-serif;font-size:10px;letter-spacing:-0.5px;word-spacing:0.8px' text-anchor="start">22 Jul 21:00</text><rect x="333" y="552" width="1" height="3" fill="#ffffff"/><text x="332" y="564" fill="#ffffff" style='font-family:"Liberation Sans",sans-serif;font-size:10px;letter-spacing:-0.5px;word-spacing:0.8px' text-anchor="start">25 Jul 05:00</text><rect x="397" y="552" width="1" height="3" fill="#ffffff"/><text x="396" y="564" fill="#ffffff" style='font-family:"Liberation Sans",sans-serif;font-size:10px;letter-spacing:-0.5px;word-spacing:0.8px' text-anchor="start">25 Jul 13:00</text><rect x="461" y="552" width="1" height="3" fill="#ffffff"/><text x="460" y="564" fill="#ffffff" style='font-family:"Liberation Sans",sans-serif;font-size:10px;letter-spacing:-0.5px;word-spacing:0.8px' text-anchor="start">25 Jul 21:00</text><rect x="525" y="552" width="1" height="3" fill="#ffffff"/><text x="524" y="564" fill="#ffffff" style='font-family:"Liberation Sans",sans-serif;font-size:10px;letter-spacing:-0.5px;word-spacing:0.8px' text-anchor="start">26 Jul 05:00</text><rect x="589" y="552" width="1" height="3" fill="#ffffff"/><text x="588" y="564" fill="#ffffff" style='font-family:"Liberation Sans",sans-serif;font-size:10px;letter-spacing:-0.5px;word-spacing:0.8px' text-anchor="start">26 Jul 13:00</text><rect x="653" y="552" width="1" height="3" fill="#ffffff"/><text x="652" y="564" fill="#ffffff" style='font-family:"Liberation Sans",sans-serif;font-size:10px;letter-spacing:-0.5px;word-spacing:0.8px' text-anchor="start">26 Jul 21:00</text><polygon points="15.5,39.5 23.5,39.5 19.5,44" fill="#ffffff" shape-rendering="geometricPrecision"/><text x="28" y="45" fill="#ffffff" style='font-family:"Liberation Sans",sans-serif;font-size:9.5px;letter-spacing:-0.2px;word-spacing:0.8px;white-space:pre'>USDJPY,H1  144.744 144.752 144.687 144.695</text><text x="17" y="299" fill="#ffffff" style='font-family:"Liberation Serif",serif;font-size:10px;letter-spacing:0.05px;word-spacing:1.2px'>CCI(14) 45.0827</text><text x="17" y="433" fill="#ffffff" style='font-family:"Liberation Sans",sans-serif;font-size:10px;letter-spacing:-0.5px;word-spacing:0.8px' text-anchor="start">R1(26) -12.2&#160;&#160;R1(52) 63.7</text></svg>
</body></html>
